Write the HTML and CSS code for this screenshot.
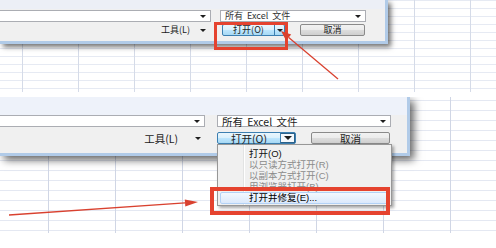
FILE: index.html
```html
<!DOCTYPE html>
<html lang="zh-CN">
<head>
    <meta charset="UTF-8">
    <title>打开并修复</title>
    <link rel="stylesheet" href="styles.css">
</head>
<body>
    <div class="shot shot-a">
        <div class="dlg dlg-a">
            <div class="dlg-top"></div>
            <div class="row row1">
                <div class="combo name"><span class="arr"></span></div>
                <div class="combo type">所有 Excel 文件<span class="arr"></span></div>
            </div>
            <div class="row row2">
                <div class="tools">工具(L)</div>
                <div class="tools-arr"><span class="arr"></span></div>
                <div class="btn open">
                    <span class="main">打开(O)</span>
                    <span class="split"><span class="arr"></span></span>
                </div>
                <div class="btn cancel">取消</div>
            </div>
            <span class="grip"></span>
        </div>
        <div class="mark mark-a"></div>
        <svg class="arrow" width="496" height="92" viewBox="0 0 496 92">
            <line x1="338" y1="79" x2="288.7" y2="37.5" stroke="#d9412f" stroke-width="1.3"/>
            <polygon points="281,31 291.2,34.4 286.1,40.5" fill="#d9412f"/>
        </svg>
    </div>

    <div class="shot shot-b">
        <div class="dlg dlg-b">
            <div class="dlg-top"></div>
            <div class="row row1">
                <div class="combo name"><span class="arr"></span></div>
                <div class="combo type">所有 Excel 文件<span class="arr"></span></div>
            </div>
            <div class="row row2">
                <div class="tools">工具(L)</div>
                <div class="tools-arr"><span class="arr"></span></div>
                <div class="btn open">
                    <span class="main">打开(O)</span>
                    <span class="split"><span class="arr"></span></span>
                </div>
                <div class="btn cancel">取消</div>
            </div>
        </div>

        <ul class="menu">
            <li class="item">打开(O)</li>
            <li class="item off">以只读方式打开(R)</li>
            <li class="item off">以副本方式打开(C)</li>
            <li class="item off">用浏览器打开(B)</li>
            <li class="item hover"><span>打开并修复(E)...</span></li>
        </ul>

        <div class="mark mark-b"></div>
        <svg class="arrow" width="496" height="136" viewBox="0 0 496 136">
            <line x1="9" y1="118" x2="185" y2="105.9" stroke="#d9412f" stroke-width="1.3"/>
            <polygon points="198,105 185.3,109.4 184.8,102.4" fill="#d9412f"/>
        </svg>
    </div>
</body>
</html>
```

FILE: styles.css
```css
* {
    margin: 0;
    padding: 0;
    box-sizing: border-box;
}

body {
    font-family: "Noto Sans CJK SC", "Liberation Sans", sans-serif;
    background: #fff;
    color: #222;
    width: 496px;
    height: 248px;
    overflow: hidden;
}

.shot {
    position: relative;
    overflow: hidden;
}

.shot-a {
    height: 92px;
    margin-bottom: 5px;
    background-color: #fff;
    background-image:
        linear-gradient(to right, #d5dbe8 1px, transparent 1px),
        linear-gradient(to bottom, #e6eaf3 1px, transparent 1px);
    background-size: 56px 8px, 56px 8px;
    background-position: 22px 0, 0 0;
}

.shot-b {
    height: 136px;
    background-color: #fff;
    background-image:
        linear-gradient(to right, #d0d6e5 1px, transparent 1px),
        linear-gradient(to bottom, #e4e8f2 1px, transparent 1px);
    background-size: 67px 10px, 67px 10px;
    background-position: 48px 0, 0 3px;
}

/* dialog */
.dlg {
    position: relative;
    background: #f0f0f0;
    border-right: 3px solid #b1cbe8;
    border-bottom: 3px solid #b1cbe8;
}

.dlg-a {
    width: 388px;
    height: 44px;
    box-shadow: 3px 3px 5px rgba(0, 0, 0, 0.55);
}

.dlg-b {
    width: 410px;
    height: 59px;
    box-shadow: 4px 4px 8px rgba(0, 0, 0, 0.6);
}

.dlg-a .dlg-top {
    height: 9px;
    background: #eceff6;
}

.dlg-b .dlg-top {
    height: 18px;
    background: #eef2fa;
}

.row {
    display: flex;
    align-items: center;
}

.combo {
    display: flex;
    align-items: center;
    background: #fff;
    border: 1px solid #abadb3;
    height: 100%;
}

.combo.name {
    border-left: none;
}

.combo .arr {
    margin-left: auto;
    margin-right: 4px;
}

.arr {
    display: inline-block;
    width: 0;
    height: 0;
    border-left: 3px solid transparent;
    border-right: 3px solid transparent;
    border-top: 3px solid #1e1e1e;
}

.tools {
    text-align: right;
    color: #1a1a1a;
}

.tools-arr {
    display: flex;
    justify-content: center;
    align-items: center;
}

.btn {
    display: flex;
    align-items: center;
    justify-content: center;
    height: 100%;
    border-radius: 2px;
}

.btn.open {
    border: 1px solid #3c7fb1;
    background: linear-gradient(#eaf6fd, #d9f0fc 50%, #bee6fd 51%, #a7d9f5);
}

.btn.open .main {
    flex: 1;
    text-align: center;
}

.btn.open .split {
    display: flex;
    align-items: center;
    justify-content: center;
    height: 100%;
    border-left: 1px solid #3c7fb1;
}

.btn.cancel {
    border: 1px solid #8a8a8a;
    background: linear-gradient(#f2f2f2, #ebebeb 50%, #dddddd 51%, #cfcfcf);
}

/* top dialog sizes */
.dlg-a .row,
.dlg-a .combo {
    font-size: 9px;
    line-height: 10px;
}

.dlg-a .row1 {
    margin-top: 1px;
    height: 12px;
}

.dlg-a .name {
    width: 211px;
}

.dlg-a .type {
    margin-left: 9px;
    width: 146px;
    padding-left: 4px;
    color: #333;
    word-spacing: 2px;
}

.dlg-a .row2 {
    margin-top: 2px;
    height: 12px;
}

.dlg-a .tools {
    width: 190px;
}

.dlg-a .tools-arr {
    width: 26px;
}

.dlg-a .open {
    margin-left: 6px;
    width: 63px;
}

.dlg-a .split {
    width: 10px;
}

.dlg-a .cancel {
    margin-left: 15px;
    width: 65px;
}

.grip {
    position: absolute;
    right: 4px;
    bottom: 2px;
    width: 5px;
    height: 5px;
    background: radial-gradient(circle, #cfcfcf 0.5px, transparent 0.7px);
    background-size: 2px 2px;
}

/* bottom dialog sizes */
.dlg-b .row,
.dlg-b .combo {
    font-size: 10.5px;
    line-height: 11px;
}

.dlg-b .row1 {
    height: 12px;
}

.dlg-b .name {
    width: 205px;
}

.dlg-b .type {
    margin-left: 12px;
    width: 174px;
    padding-left: 4px;
    color: #222;
    word-spacing: 2px;
}

.dlg-b .row2 {
    margin-top: 5px;
    height: 12px;
}

.dlg-b .tools {
    width: 178px;
}

.dlg-b .tools-arr {
    width: 39px;
}

.dlg-b .open {
    width: 79px;
}

.dlg-b .split {
    width: 15px;
    background: #f4f8fc;
    border: 1px solid #2c628b;
}

.dlg-b .split .arr {
    border-left-width: 4px;
    border-right-width: 4px;
    border-top-width: 4px;
}

.dlg-b .cancel {
    margin-left: 15px;
    width: 79px;
}

/* dropdown menu */
.menu {
    position: absolute;
    left: 217px;
    top: 47px;
    width: 175px;
    height: 62px;
    list-style: none;
    padding: 3px 2px 1px 0;
    border: 1px solid #979797;
    background:
        linear-gradient(to right, transparent 25px, #e2e3e3 25px, #e2e3e3 26px, #fff 26px, #fff 27px, transparent 27px),
        #f0f0f0;
    box-shadow: 2px 2px 3px rgba(0, 0, 0, 0.35);
    font-family: "Liberation Sans", "Noto Sans CJK SC", sans-serif;
    font-size: 9.5px;
}

.item {
    height: 11px;
    line-height: 11px;
    padding-left: 31px;
    color: #111;
}

.item.off {
    color: #8b8b8b;
}

.item.hover {
    height: 12px;
    padding-left: 2px;
}

.item.hover span {
    display: block;
    height: 12px;
    line-height: 10px;
    padding-left: 28px;
    border: 1px solid #b3d2f6;
    border-radius: 2px;
    background: linear-gradient(#f3f8fe, #dbe9fb);
    color: #000;
}

/* red highlights */
.mark {
    position: absolute;
    border: 3px solid #e5432f;
}

.mark-a {
    left: 214px;
    top: 22px;
    width: 74px;
    height: 28px;
}

.mark-b {
    left: 210px;
    top: 90px;
    width: 180px;
    height: 28px;
    border-width: 4px;
}

.arrow {
    position: absolute;
    left: 0;
    top: 0;
}
```
